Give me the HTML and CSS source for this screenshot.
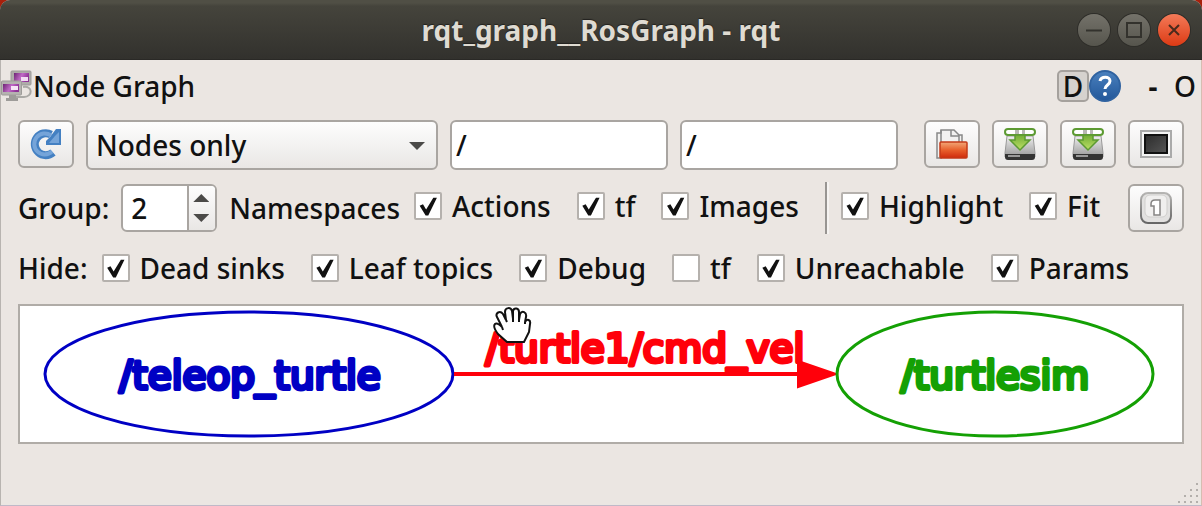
FILE: index.html
```html
<!DOCTYPE html>
<html lang="en">
<head>
    <meta charset="UTF-8">
    <meta name="viewport" content="width=device-width, initial-scale=1.0">
    <title>rqt_graph__RosGraph - rqt</title>
    <link rel="stylesheet" href="styles.css">
</head>
<body>
    <div class="window">
        <header class="titlebar">
            <h1 class="title">rqt_graph__RosGraph - rqt</h1>
            <div class="window-buttons">
                <button type="button" class="window-btn" aria-label="Minimize">
                    <svg viewBox="0 0 32 32"><path d="M8 16.500h16" /></svg>
                </button>
                <button type="button" class="window-btn" aria-label="Maximize">
                    <svg viewBox="0 0 32 32"><rect x="9" y="9" width="14" height="14" /></svg>
                </button>
                <button type="button" class="window-btn close" aria-label="Close">
                    <svg viewBox="0 0 32 32"><path d="M11 11l10 10M21 11l-10 10" /></svg>
                </button>
            </div>
        </header>

        <div class="dock-header">
            <svg class="dock-icon" viewBox="0 0 32 34">
                <defs>
                    <linearGradient id="screen" x1="0" y1="0" x2="1" y2="0.3">
                        <stop offset="0" stop-color="#6d2374" />
                        <stop offset="0.55" stop-color="#c06bc6" />
                        <stop offset="1" stop-color="#8e3296" />
                    </linearGradient>
                </defs>
                <path d="M22 18c10-2 10 10 1 10h-8" fill="none" stroke="#aaa9a5" stroke-width="2" />
                <rect x="10" y="2" width="20" height="14" rx="1" fill="#aeaca9" stroke="#9e9c99" />
                <rect x="13" y="4" width="15" height="9" fill="url(#screen)" />
                <path d="M20 8h7v4h-7z" fill="#f2dcf3" />
                <rect x="0.500" y="12" width="20" height="14" rx="1" fill="#b5b3b0" stroke="#9e9c99" />
                <rect x="2" y="15" width="16" height="8" fill="url(#screen)" />
                <path d="M10 17h7v4h-7z" fill="#f6e6f7" />
                <path d="M8 26h7v3h2v3H5v-3h3z" fill="#9e9c99" />
            </svg>
            <h2 class="dock-title">Node Graph</h2>
            <div class="dock-actions">
                <button type="button" class="dock-btn framed">D</button>
                <button type="button" class="dock-btn" aria-label="Help">
                    <svg viewBox="0 0 32 32">
                        <defs>
                            <linearGradient id="help" x1="0" y1="0" x2="0" y2="1">
                                <stop offset="0" stop-color="#4a80bd" />
                                <stop offset="1" stop-color="#22579a" />
                            </linearGradient>
                        </defs>
                        <circle cx="16" cy="16" r="15" fill="url(#help)" stroke="#2f62a0" stroke-width="2" />
                        <path d="M11 11c1-5 10-5 10 0 0 4-5 4-5 8" fill="none" stroke="#fff" stroke-width="3" />
                        <circle cx="16" cy="24" r="2" fill="#fff" />
                    </svg>
                </button>
                <button type="button" class="dock-btn dash">-</button>
                <button type="button" class="dock-btn">O</button>
            </div>
        </div>

        <main class="content">
            <div class="row filters">
                <button type="button" class="tool-btn" aria-label="Refresh">
                    <svg viewBox="0 0 32 32">
                        <path d="M23 24.500a11 11 0 1 1-2-18" fill="none" stroke="#4480c2" stroke-width="8" />
                        <path d="M26 1h5v16H16v-4l4-4z" fill="#4480c2" />
                        <path d="M22 23.500a10.500 10.500 0 1 1-1-16" fill="none" stroke="#75a4d9" stroke-width="4" />
                        <path d="M29 4v11H19l6-7z" fill="#75a4d9" />
                    </svg>
                </button>
                <div class="select">
                    <select aria-label="Graph type">
                        <option>Nodes only</option>
                        <option>Nodes/Topics (active)</option>
                        <option>Nodes/Topics (all)</option>
                    </select>
                </div>
                <input type="text" class="text-input" aria-label="Node filter" value="/">
                <input type="text" class="text-input" aria-label="Topic filter" value="/">
                <div class="tools">
                    <button type="button" class="tool-btn" aria-label="Load">
                        <svg viewBox="0 0 32 32">
                            <defs>
                                <linearGradient id="folder" x1="0" y1="0" x2="0" y2="1">
                                    <stop offset="0" stop-color="#f2a878" />
                                    <stop offset="0.5" stop-color="#e8602c" />
                                    <stop offset="1" stop-color="#cf2a0c" />
                                </linearGradient>
                            </defs>
                            <path d="M1 5h4V2h13l5 5h3v8H5v15H1z" fill="#f2f1f0" stroke="#888" stroke-width="1.500" />
                            <path d="M5 2v13M15 2v6h8M23 7v7" fill="none" stroke="#888" stroke-width="1.500" />
                            <rect x="4" y="14" width="27" height="16" rx="1" fill="url(#folder)" stroke="#c33a18" stroke-width="1.500" />
                        </svg>
                    </button>
                    <button type="button" class="tool-btn" aria-label="Save as DOT">
                        <svg viewBox="0 0 32 32">
                            <defs>
                                <linearGradient id="drive" x1="0" y1="0" x2="0" y2="1">
                                    <stop offset="0" stop-color="#efefef" />
                                    <stop offset="1" stop-color="#999" />
                                </linearGradient>
                                <linearGradient id="arrow" x1="0" y1="0" x2="0" y2="1">
                                    <stop offset="0" stop-color="#72ad36" />
                                    <stop offset="1" stop-color="#bde066" />
                                </linearGradient>
                            </defs>
                            <path d="M3 8h26l2 17v4H1v-4z" fill="url(#drive)" stroke="#999" />
                            <path d="M1 26h30v3q0 3-3 3H4q-3 0-3-3z" fill="#333" />
                            <path d="M4 28h12" stroke="#999" stroke-width="2" />
                            <rect x="1" y="1" width="30" height="6" rx="3" fill="#fff" stroke="#5c9a32" stroke-width="2" />
                            <path d="M11 2h4v4h-4zM18 2h3v4h-3z" fill="#b8b8b4" />
                            <path d="M11 7h10v5h5L16 22 6 12h5z" fill="url(#arrow)" stroke="#5c9a32" stroke-width="1.500" />
                        </svg>
                    </button>
                    <button type="button" class="tool-btn" aria-label="Save as SVG">
                        <svg viewBox="0 0 32 32">
                            <path d="M3 8h26l2 17v4H1v-4z" fill="url(#drive)" stroke="#999" />
                            <path d="M1 26h30v3q0 3-3 3H4q-3 0-3-3z" fill="#333" />
                            <path d="M4 28h12" stroke="#999" stroke-width="2" />
                            <rect x="1" y="1" width="30" height="6" rx="3" fill="#fff" stroke="#5c9a32" stroke-width="2" />
                            <path d="M11 2h4v4h-4zM18 2h3v4h-3z" fill="#b8b8b4" />
                            <path d="M11 7h10v5h5L16 22 6 12h5z" fill="url(#arrow)" stroke="#5c9a32" stroke-width="1.500" />
                        </svg>
                    </button>
                    <button type="button" class="tool-btn" aria-label="Save as image">
                        <svg viewBox="0 0 32 32">
                            <defs>
                                <linearGradient id="image" x1="0" y1="0" x2="1" y2="1">
                                    <stop offset="0" stop-color="#2c2c2c" />
                                    <stop offset="1" stop-color="#555" />
                                </linearGradient>
                            </defs>
                            <rect x="1" y="3" width="30" height="26" fill="#f4f4f4" stroke="#aaa" stroke-width="2" />
                            <rect x="5" y="7" width="22" height="18" fill="url(#image)" stroke="#111" stroke-width="2" />
                        </svg>
                    </button>
                </div>
            </div>

            <div class="row group">
                <label for="group">Group:</label>
                <div class="spinbox">
                    <input type="number" id="group" value="2" min="0">
                    <div class="spin-buttons">
                        <button type="button" class="spin-up" id="spinUp" aria-label="Increase"></button>
                        <button type="button" class="spin-down" id="spinDown" aria-label="Decrease"></button>
                    </div>
                </div>
                <span class="namespaces">Namespaces</span>
                <label class="option"><input type="checkbox" checked>Actions</label>
                <label class="option"><input type="checkbox" checked>tf</label>
                <label class="option"><input type="checkbox" checked>Images</label>
                <div class="separator"></div>
                <label class="option"><input type="checkbox" checked>Highlight</label>
                <label class="option"><input type="checkbox" checked>Fit</label>
                <button type="button" class="tool-btn fit-btn" aria-label="Fit in view">
                    <svg viewBox="0 0 32 32">
                        <defs>
                            <linearGradient id="key" x1="0" y1="0" x2="0" y2="1">
                                <stop offset="0" stop-color="#b5b4b2" />
                                <stop offset="1" stop-color="#666" />
                            </linearGradient>
                        </defs>
                        <rect x="1" y="1" width="30" height="30" rx="7" fill="#e2e1e0" stroke="url(#key)" stroke-width="2" />
                        <rect x="5" y="3" width="22" height="22" rx="5" fill="#f0efee" stroke="#d0cfcd" />
                        <path d="M11 12q0-4 4-4h5v15h-6V14h-3z" fill="#fff" stroke="#858483" stroke-width="1.500" />
                    </svg>
                </button>
            </div>

            <div class="row hide">
                <span>Hide:</span>
                <label class="option"><input type="checkbox" checked>Dead sinks</label>
                <label class="option"><input type="checkbox" checked>Leaf topics</label>
                <label class="option"><input type="checkbox" checked>Debug</label>
                <label class="option"><input type="checkbox">tf</label>
                <label class="option"><input type="checkbox" checked>Unreachable</label>
                <label class="option"><input type="checkbox" checked>Params</label>
            </div>

            <div class="graph">
                <svg viewBox="0 0 1162 136">
                    <g class="node teleop">
                        <ellipse cx="229" cy="68" rx="204" ry="62" />
                        <text x="230" y="83">/teleop_turtle</text>
                    </g>
                    <g class="edge">
                        <path class="line" d="M434 68h350" />
                        <path class="head" d="M778 55l38 13-38 13z" />
                        <text x="625" y="56">/turtle1/cmd_vel</text>
                    </g>
                    <g class="node turtlesim">
                        <ellipse cx="975" cy="68" rx="158" ry="62" />
                        <text x="975" y="83">/turtlesim</text>
                    </g>
                    <!-- open hand cursor -->
                    <path class="hand" d="M487 36l-9-8c-3-4-5-8-3-10s5 1 7 3l-5-10c-2-4 3-7 6-3l3 6-1-8c0-5 6-5 7-1l1 8V5c1-4 6-3 6 1v8l1-6c2-4 7-2 6 3l-1 5c2-4 6-2 5 2l-1 8-5 10z" />
                    <path class="fingers" d="M482 21l1 3M486 14l1 2M493 13v3M499 14v2M505 16v2" />
                </svg>
            </div>
        </main>

        <svg class="grip" viewBox="0 0 22 22">
            <path d="M19 1h2M13 7h2M19 7h2M7 13h2M13 13h2M19 13h2M1 19h2M7 19h2M13 19h2M19 19h2" />
        </svg>
    </div>

    <script>
        const group = document.getElementById('group');

        document.getElementById('spinUp').addEventListener('click', () => group.stepUp());
        document.getElementById('spinDown').addEventListener('click', () => group.stepDown());
    </script>
</body>
</html>
```

FILE: styles.css
```css
* {
    box-sizing: border-box;
}

body {
    margin: 0;
    background: #a8200c;
    color: #111;
    font-family: "Noto Sans", sans-serif;
    font-size: 28px;
    font-weight: 500;
    line-height: 40px;
}

button, input, select {
    font: inherit;
    color: inherit;
    margin: 0;
    padding: 0;
}

svg {
    display: block;
}

.window {
    display: flex;
    flex-direction: column;
    position: relative;
    min-height: 100vh;
    background: #ebe6e2;
    border-left: 1px solid #b8b4b0;
    border-right: 1px solid #d6bdb1;
    border-bottom: 1px solid #bfb9c8;
    border-radius: 10px 10px 0 0;
}

/* Title bar */
.titlebar {
    display: grid;
    grid-template-columns: 1fr auto 1fr;
    align-items: center;
    height: 60px;
    margin: 0 -1px;
    padding: 0 12px;
    background: linear-gradient(#504f45 0, #504f45 3px, #45443c 6px, #32312d 100%);
    border-bottom: 1px solid #2a2926;
    border-radius: 10px 10px 0 0;
}

.title {
    grid-column: 2;
    margin: 0;
    color: #dfdbd2;
    font-size: 28px;
    font-weight: bold;
    text-shadow: 0 -1px 1px #22211e;
}

.window-buttons {
    display: flex;
    justify-content: flex-end;
    gap: 8px;
}

.window-btn {
    width: 32px;
    height: 32px;
    border: 0;
    border-radius: 50%;
    background: linear-gradient(#74726a, #56554d);
    box-shadow: 0 0 0 1px #2e2d29;
}

.window-btn.close {
    background: linear-gradient(#f47a58, #dc3a14);
}

.window-btn svg {
    fill: none;
    stroke: #33322d;
    stroke-width: 2;
}

.close svg {
    stroke: #4a2a1c;
}

/* Dock widget header */
.dock-header {
    display: flex;
    align-items: center;
    height: 52px;
}

.dock-icon {
    width: 32px;
    height: 34px;
}

.dock-title {
    margin: 0;
    font-size: 28px;
    font-weight: 500;
}

.dock-actions {
    display: flex;
    align-items: center;
    margin-left: auto;
}

.dock-btn {
    width: 32px;
    height: 32px;
    border: 0;
    background: none;
    line-height: 28px;
}

.dock-btn.framed {
    background: #d6d2ce;
    border: 2px solid #a5a19d;
    border-radius: 5px;
}

.dock-btn.dash {
    margin-left: 16px;
    font-weight: bold;
}

/* Toolbar rows */
.content {
    padding: 8px 17px 0;
}

.row {
    display: flex;
    align-items: center;
    gap: 12px;
    white-space: nowrap;
}

.filters {
    align-items: flex-start;
    height: 50px;
}

.tools {
    display: flex;
    gap: 12px;
    margin-left: 14px;
}

.tool-btn {
    display: flex;
    align-items: center;
    justify-content: center;
    flex: none;
    width: 56px;
    height: 48px;
    border: 2px solid #a9a5a1;
    border-radius: 6px;
    background: linear-gradient(#fdfdfd, #e9e7e5);
}

.tool-btn svg {
    width: 32px;
    height: 32px;
}

.select {
    position: relative;
    flex: 1 1 352px;
}

.select select {
    appearance: none;
    width: 100%;
    height: 50px;
    padding: 0 40px 0 8px;
    border: 2px solid #a9a5a1;
    border-radius: 6px;
    background: linear-gradient(#fdfdfd, #e9e7e5);
}

.select::after {
    content: "";
    position: absolute;
    top: 22px;
    right: 13px;
    border: 8px solid transparent;
    border-top-color: #4b4a48;
    border-bottom: 0;
    pointer-events: none;
}

.text-input {
    flex: 1 1 218px;
    min-width: 0;
    height: 50px;
    padding: 0 4px;
    border: 2px solid #a9a5a1;
    border-radius: 6px;
    background: #fff;
}

.group {
    height: 52px;
    margin-top: 12px;
}

.spinbox {
    display: flex;
    width: 96px;
    height: 48px;
    border: 2px solid #a9a5a1;
    border-radius: 6px;
    background: #fff;
    overflow: hidden;
}

.spinbox input {
    appearance: textfield;
    flex: 1;
    min-width: 0;
    padding-left: 8px;
    border: 0;
    background: none;
}

.spinbox input::-webkit-inner-spin-button {
    appearance: none;
    margin: 0;
}

.spin-buttons {
    display: flex;
    flex-direction: column;
    justify-content: center;
    gap: 12px;
    width: 28px;
    padding-left: 4px;
    border-left: 2px solid #a9a5a1;
    background: linear-gradient(#fdfdfd, #e9e7e5);
}

.spin-up, .spin-down {
    width: 16px;
    height: 8px;
    border: 0;
    background: #4b4a48;
}

.spin-up {
    clip-path: polygon(50% 0, 100% 100%, 0 100%);
}

.spin-down {
    clip-path: polygon(0 0, 100% 0, 50% 100%);
}

.option {
    display: flex;
    align-items: center;
    gap: 10px;
    margin-right: 12px;
}

.group .option {
    margin-right: 14px;
    padding-bottom: 4px;
}

.namespaces {
    margin-right: 2px;
}

.option input {
    appearance: none;
    flex: none;
    width: 28px;
    height: 28px;
    border: 2px solid #b5b1ad;
    border-radius: 2px;
    background: #fff;
}

.option input:checked::before {
    content: "";
    display: block;
    width: 24px;
    height: 24px;
    background: #111;
    clip-path: polygon(15% 49%, 29% 43%, 42% 65%, 72% 16%, 87% 16%, 51% 90%, 40% 90%);
}

.separator {
    width: 4px;
    height: 52px;
    border-left: 2px solid #989592;
    border-right: 2px solid #f5f3f1;
}

.fit-btn {
    margin-left: auto;
}

.hide {
    gap: 14px;
    height: 40px;
    margin-top: 14px;
}

/* Graph view */
.graph {
    margin-top: 16px;
    border: 2px solid #b0aca7;
    background: #fff;
}

.graph svg {
    width: 100%;
    font-family: "DejaVu Sans", sans-serif;
    font-size: 39px;
    font-weight: normal;
    text-anchor: middle;
}

.graph text {
    stroke-width: 4;
    stroke-linejoin: round;
}

.node ellipse {
    fill: none;
    stroke-width: 3;
}

.teleop ellipse, .teleop text {
    stroke: #0000c4;
}

.teleop text {
    fill: #0000c4;
}

.turtlesim ellipse, .turtlesim text {
    stroke: #14a004;
}

.turtlesim text {
    fill: #14a004;
}

.edge {
    fill: #ff000a;
    stroke: #ff000a;
}

.edge .line {
    stroke-width: 4;
}

.edge .head {
    stroke-width: 2;
}

.hand {
    fill: #fff;
    stroke: #111;
    stroke-width: 2;
}

.fingers {
    fill: none;
    stroke: #111;
    stroke-width: 2;
}

.grip {
    align-self: flex-end;
    width: 22px;
    height: 22px;
    margin: auto 2px 0 0;
    stroke: #b3afab;
    stroke-width: 2;
}
```
